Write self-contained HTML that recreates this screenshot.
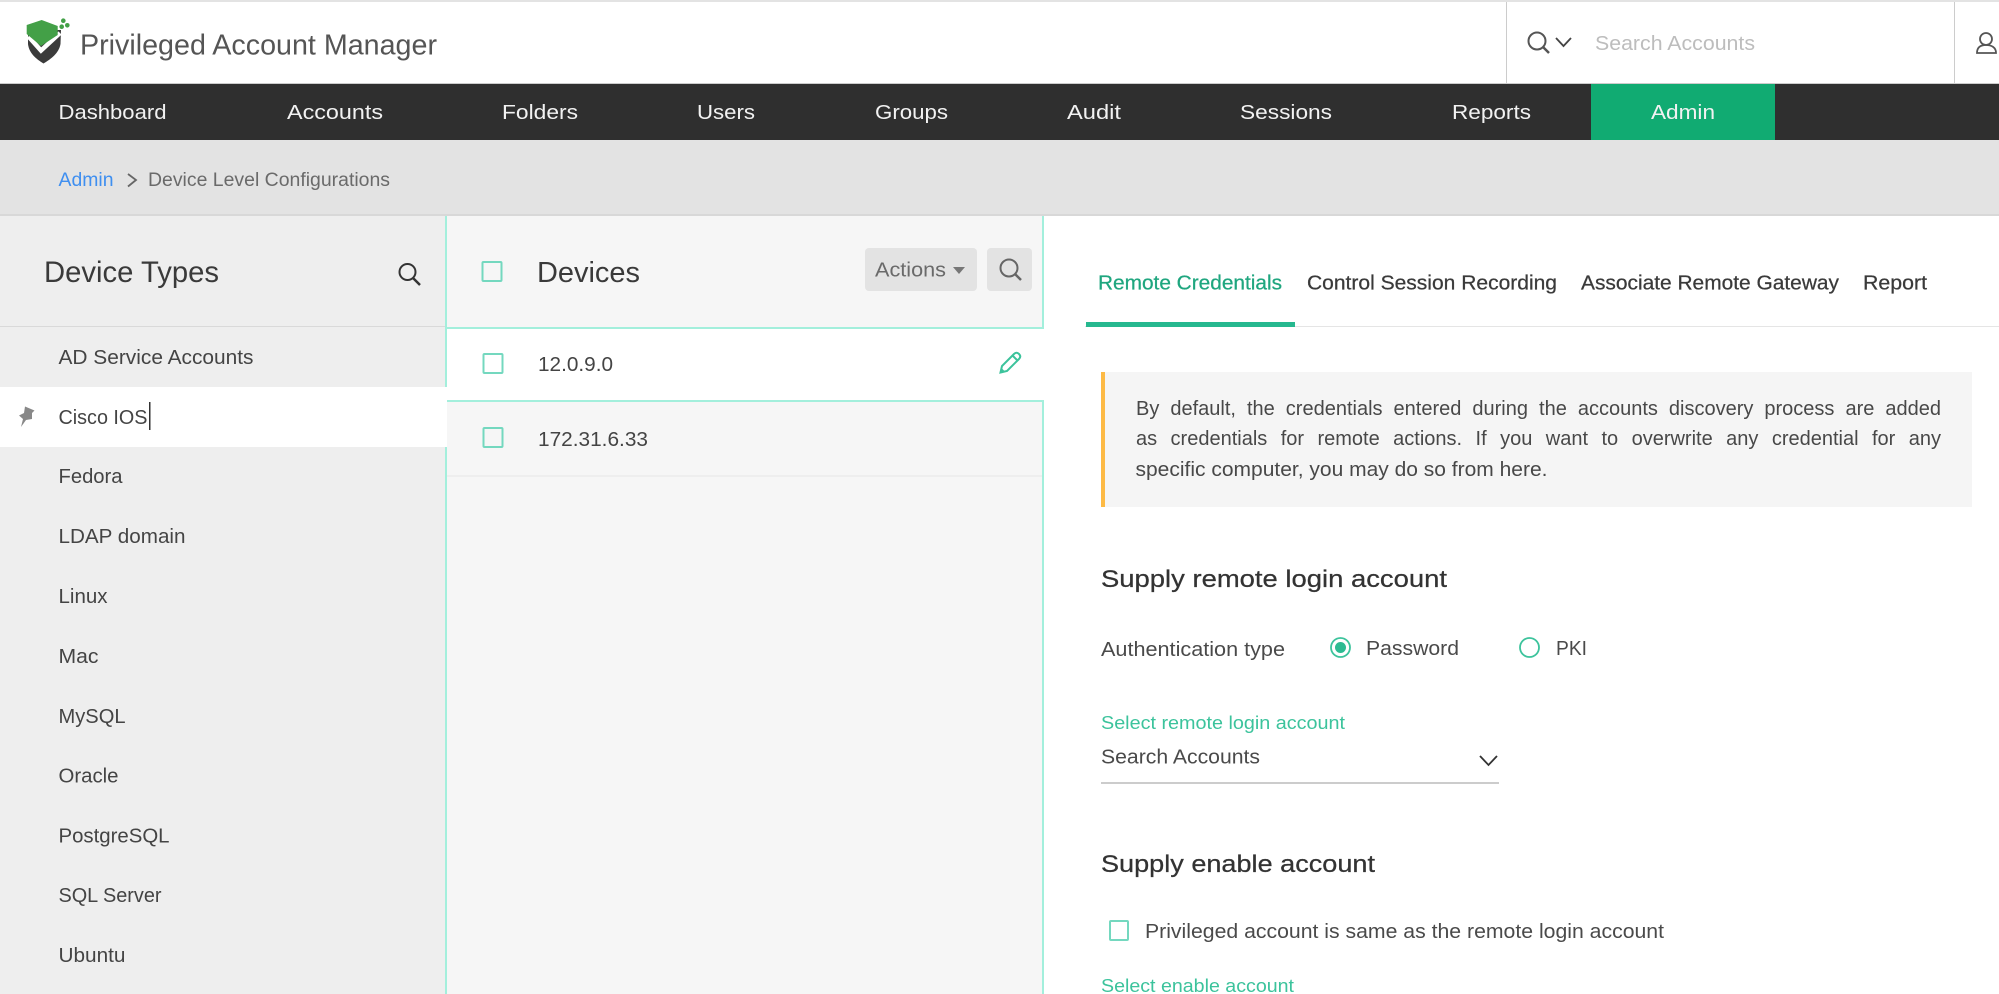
<!DOCTYPE html>
<html lang="en"><head><meta charset="utf-8"><title>Privileged Account Manager</title>
<style>
html,body{margin:0;padding:0;background:#fff;width:1999px;height:994px;overflow:hidden;font-family:"Liberation Sans",sans-serif}
.b{position:absolute}
svg{position:absolute;left:0;top:0;filter:blur(.3px)}
text{font-family:"Liberation Sans",sans-serif}
.n{font-size:20.5px;fill:#f2f2f2}
.l{font-size:20.4px;fill:#444}
.tab{font-size:20px;fill:#3a3a3a;stroke:#3a3a3a;stroke-width:.25px}
.h{font-size:24.5px;fill:#333;stroke:#333;stroke-width:.25px}
.g{font-size:18.5px;fill:#3cc39c}
.f{font-size:20px;fill:#4a4a4a}
.cb{fill:none;stroke:#74d8bf;stroke-width:2}
.note{position:absolute;left:1136px;width:805px;height:30px;line-height:30px;font-size:20px;color:#484848;text-align:justify;text-align-last:justify;white-space:nowrap;filter:blur(.3px)}
</style></head><body>
<div class="b" style="left:0;top:0;width:1999px;height:2px;background:#e3e3e3"></div>
<div class="b" style="left:0;top:83px;width:1999px;height:1px;background:#ccc"></div>
<div class="b" style="left:1506px;top:2px;width:1px;height:81px;background:#ccc"></div>
<div class="b" style="left:1954px;top:2px;width:1px;height:81px;background:#ccc"></div>
<div class="b" style="left:0;top:84px;width:1999px;height:56px;background:#2f2f2f"></div>
<div class="b" style="left:1591px;top:84px;width:184px;height:56px;background:#11ab72"></div>
<div class="b" style="left:0;top:140px;width:1999px;height:74px;background:#e3e3e3"></div>
<div class="b" style="left:0;top:214px;width:1999px;height:2px;background:#d8d8d8"></div>
<!-- left panel -->
<div class="b" style="left:0;top:216px;width:445px;height:778px;background:#eee"></div>
<div class="b" style="left:0;top:326px;width:445px;height:1px;background:#d9d9d9"></div>
<div class="b" style="left:445px;top:216px;width:2px;height:778px;background:#a3efdc"></div>
<!-- devices panel -->
<div class="b" style="left:447px;top:216px;width:595px;height:778px;background:#f6f6f6"></div>
<div class="b" style="left:1042px;top:216px;width:2px;height:112px;background:#a3efdc"></div>
<div class="b" style="left:1042px;top:401px;width:2px;height:593px;background:#a3efdc"></div>
<div class="b" style="left:447px;top:329px;width:597px;height:72px;background:#fff"></div>
<div class="b" style="left:446px;top:327px;width:598px;height:2px;background:#a3efdc"></div>
<div class="b" style="left:446px;top:400px;width:598px;height:2px;background:#a3efdc"></div>
<div class="b" style="left:447px;top:475px;width:595px;height:2px;background:#eee"></div>
<div class="b" style="left:0;top:387px;width:447px;height:60px;background:#fff"></div>
<div class="b" style="left:865px;top:248px;width:112px;height:43px;background:#e3e3e3;border-radius:4px"></div>
<div class="b" style="left:987px;top:248px;width:45px;height:43px;background:#e3e3e3;border-radius:4px"></div>
<!-- tabs -->
<div class="b" style="left:1085px;top:326px;width:914px;height:1px;background:#e5e5e5"></div>
<div class="b" style="left:1086px;top:322px;width:209px;height:5px;background:#26b88f"></div>
<!-- note -->
<div class="b" style="left:1101px;top:372px;width:871px;height:135px;background:#f5f5f5"></div>
<div class="b" style="left:1101px;top:372px;width:4px;height:135px;background:#fdba45"></div>
<div class="note" style="top:394px">By default, the credentials entered during the accounts discovery process are added</div>
<div class="note" style="top:424px">as credentials for remote actions. If you want to overwrite any credential for any</div>
<div class="b" style="left:1101px;top:782px;width:398px;height:2px;background:#ccc"></div>

<svg width="1999" height="994" viewBox="0 0 1999 994">
<!-- logo -->
<path d="M28 34 L28 44 C29 53 36 59 43.500 63.500 C51 59 59 53 60.500 44 L61 30 L57 30 Z" fill="#3b3b3b"/>
<path d="M28.500 36.500 L41 50.500 L60 33" fill="none" stroke="#fff" stroke-width="4.500"/>
<path d="M26.700 25 L41.700 20 L57.700 26 L57.700 35 L41 46 L26.700 34 Z" fill="#43a047"/>
<circle cx="63.300" cy="20.700" r="2.300" fill="#43a047"/><circle cx="67.300" cy="25.300" r="2.300" fill="#43a047"/><circle cx="61.700" cy="26.700" r="2.300" fill="#43a047"/>
<text x="80" y="54.500" font-size="29" fill="#555" textLength="357" lengthAdjust="spacingAndGlyphs">Privileged Account Manager</text>

<!-- top search -->
<circle cx="1537" cy="41" r="8.500" fill="none" stroke="#555" stroke-width="2"/>
<path d="M1543 47 L1549 53" stroke="#555" stroke-width="2.500"/>
<path d="M1556 38 L1563.500 46 L1571 38" fill="none" stroke="#444" stroke-width="1.800"/>
<text x="1595" y="50" font-size="20" fill="#bdbdbd" textLength="160" lengthAdjust="spacingAndGlyphs">Search Accounts</text>
<circle cx="1986" cy="39" r="6" fill="none" stroke="#555" stroke-width="1.800"/>
<path d="M1977 53 C1977 47 1981 45 1986 45 C1991 45 1996 47 1996 53 Z" fill="none" stroke="#555" stroke-width="1.800"/>

<!-- nav -->
<text class="n" x="58.500" y="119" textLength="108" lengthAdjust="spacingAndGlyphs">Dashboard</text>
<text class="n" x="287" y="119" textLength="96" lengthAdjust="spacingAndGlyphs">Accounts</text>
<text class="n" x="502" y="119" textLength="76" lengthAdjust="spacingAndGlyphs">Folders</text>
<text class="n" x="697" y="119" textLength="58" lengthAdjust="spacingAndGlyphs">Users</text>
<text class="n" x="875" y="119" textLength="73" lengthAdjust="spacingAndGlyphs">Groups</text>
<text class="n" x="1067" y="119" textLength="54" lengthAdjust="spacingAndGlyphs">Audit</text>
<text class="n" x="1240" y="119" textLength="92" lengthAdjust="spacingAndGlyphs">Sessions</text>
<text class="n" x="1452" y="119" textLength="79" lengthAdjust="spacingAndGlyphs">Reports</text>
<text class="n" x="1651" y="119" textLength="64" lengthAdjust="spacingAndGlyphs">Admin</text>

<!-- breadcrumb -->
<text x="58.500" y="186" font-size="19" fill="#3f8ff0" textLength="55" lengthAdjust="spacingAndGlyphs">Admin</text>
<path d="M128 174 L136 180 L128 186.500" fill="none" stroke="#666" stroke-width="1.800"/>
<text x="148" y="186" font-size="19" fill="#6a6a6a" textLength="242" lengthAdjust="spacingAndGlyphs">Device Level Configurations</text>

<!-- left panel -->
<text x="44" y="282" font-size="30" fill="#3a3a3a" textLength="175" lengthAdjust="spacingAndGlyphs">Device Types</text>
<circle cx="407.500" cy="272" r="8" fill="none" stroke="#333" stroke-width="2"/>
<path d="M413 278 L420 285" stroke="#333" stroke-width="2.500"/>
<text class="l" x="58.500" y="364" textLength="195" lengthAdjust="spacingAndGlyphs">AD Service Accounts</text>
<path d="M25 406.500 L34.500 410.500 L32 413 L32 419 L26 420 L21 427 L23 419 L19 415.500 L24 413 Z" fill="#888"/>
<text class="l" x="58.500" y="424" textLength="89" lengthAdjust="spacingAndGlyphs">Cisco IOS</text>
<rect x="149" y="402" width="1.500" height="28" fill="#333"/>
<text class="l" x="58.500" y="483" textLength="64" lengthAdjust="spacingAndGlyphs">Fedora</text>
<text class="l" x="58.500" y="543" textLength="127" lengthAdjust="spacingAndGlyphs">LDAP domain</text>
<text class="l" x="58.500" y="603" textLength="49" lengthAdjust="spacingAndGlyphs">Linux</text>
<text class="l" x="58.500" y="663" textLength="40" lengthAdjust="spacingAndGlyphs">Mac</text>
<text class="l" x="58.500" y="723" textLength="67" lengthAdjust="spacingAndGlyphs">MySQL</text>
<text class="l" x="58.500" y="782.500" textLength="60" lengthAdjust="spacingAndGlyphs">Oracle</text>
<text class="l" x="58.500" y="842.500" textLength="111" lengthAdjust="spacingAndGlyphs">PostgreSQL</text>
<text class="l" x="58.500" y="902" textLength="103" lengthAdjust="spacingAndGlyphs">SQL Server</text>
<text class="l" x="58.500" y="962" textLength="67" lengthAdjust="spacingAndGlyphs">Ubuntu</text>

<!-- devices -->
<rect class="cb" x="482.500" y="262" width="19" height="19" rx="1"/>
<text x="537" y="282" font-size="29" fill="#3a3a3a" textLength="103" lengthAdjust="spacingAndGlyphs">Devices</text>
<text x="875" y="276.500" font-size="20" fill="#6a6a6a" textLength="71" lengthAdjust="spacingAndGlyphs">Actions</text>
<path d="M953 267 L965 267 L959 274 Z" fill="#777"/>
<circle cx="1009" cy="268" r="8.500" fill="none" stroke="#666" stroke-width="2"/>
<path d="M1015 274 L1021 280" stroke="#666" stroke-width="2.500"/>
<rect class="cb" x="483.500" y="354" width="19" height="19" rx="1"/>
<text class="l" x="538" y="371" textLength="75" lengthAdjust="spacingAndGlyphs">12.0.9.0</text>
<path d="M1000.500 372.500 L1002 366 L1014 354 Q1016.500 351.500 1019 354 Q1021.500 356.500 1019 359 L1007 371 Z M1012.500 355.500 L1017.500 360.500" fill="none" stroke="#3cc39c" stroke-width="2"/>
<path d="M1000 373 L1001.500 368 L1005 371.500 Z" fill="#3cc39c"/>
<rect class="cb" x="483.500" y="428" width="19" height="19" rx="1"/>
<text class="l" x="538" y="446" textLength="110" lengthAdjust="spacingAndGlyphs">172.31.6.33</text>

<!-- tabs -->
<text class="tab" style="fill:#1fa67f;stroke:#1fa67f" x="1098" y="289.500" textLength="184" lengthAdjust="spacingAndGlyphs">Remote Credentials</text>
<text class="tab" x="1307" y="289.500" textLength="250" lengthAdjust="spacingAndGlyphs">Control Session Recording</text>
<text class="tab" x="1581" y="289.500" textLength="258" lengthAdjust="spacingAndGlyphs">Associate Remote Gateway</text>
<text class="tab" x="1863" y="289.500" textLength="64" lengthAdjust="spacingAndGlyphs">Report</text>

<text x="1135.500" y="476" font-size="20" fill="#484848" textLength="412" lengthAdjust="spacingAndGlyphs">specific computer, you may do so from here.</text>

<!-- form -->
<text class="h" x="1101" y="587" textLength="346" lengthAdjust="spacingAndGlyphs">Supply remote login account</text>
<text class="f" x="1101" y="656" textLength="184" lengthAdjust="spacingAndGlyphs">Authentication type</text>
<circle cx="1340.500" cy="647.500" r="9.500" fill="none" stroke="#3cc39c" stroke-width="1.800"/>
<circle cx="1340.500" cy="647.500" r="5.500" fill="#2dbb92"/>
<text class="f" x="1366" y="655" textLength="93" lengthAdjust="spacingAndGlyphs">Password</text>
<circle cx="1529.500" cy="647.500" r="9.500" fill="none" stroke="#3cc39c" stroke-width="1.800"/>
<text class="f" x="1556" y="655" textLength="31" lengthAdjust="spacingAndGlyphs">PKI</text>
<text class="g" x="1101" y="729" textLength="244" lengthAdjust="spacingAndGlyphs">Select remote login account</text>
<text class="f" x="1101" y="763.500" textLength="159" lengthAdjust="spacingAndGlyphs">Search Accounts</text>
<path d="M1480 756 L1488.500 765 L1497 756" fill="none" stroke="#333" stroke-width="1.800"/>
<text class="h" x="1101" y="872" textLength="274" lengthAdjust="spacingAndGlyphs">Supply enable account</text>
<rect class="cb" x="1110" y="921" width="18" height="19" rx="1"/>
<text class="f" x="1145" y="938" textLength="519" lengthAdjust="spacingAndGlyphs">Privileged account is same as the remote login account</text>
<text class="g" x="1101" y="992" textLength="193" lengthAdjust="spacingAndGlyphs">Select enable account</text>
</svg>
</body></html>
